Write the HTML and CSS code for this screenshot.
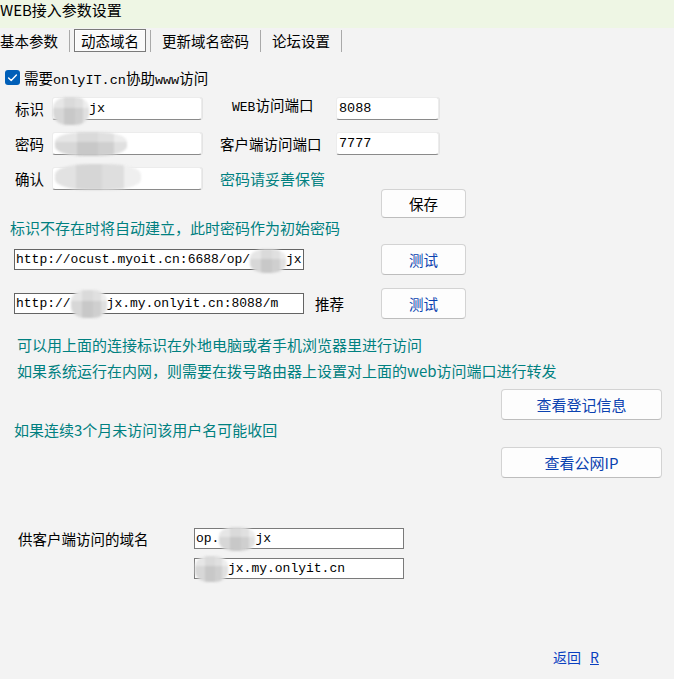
FILE: index.html
```html
<!DOCTYPE html>
<html lang="zh-CN">
<head>
  <meta charset="UTF-8" />
  <title>WEB接入参数设置</title>
  <link rel="stylesheet" href="styles.css">
</head>
<body>

  <!-- title bar -->
  <div class="titlebar">WEB接入参数设置</div>

  <!-- tab strip -->
  <div class="tabs">
    <span class="tab">基本参数</span>
    <i class="tab-sep"></i>
    <span class="tab active">动态域名</span>
    <i class="tab-sep"></i>
    <span class="tab">更新域名密码</span>
    <i class="tab-sep"></i>
    <span class="tab">论坛设置</span>
    <i class="tab-sep"></i>
  </div>

  <div class="panel">
    <label class="check-row">
      <svg class="checkbox" width="15" height="15" viewBox="0 0 15 15">
        <rect x="0" y="0" width="15" height="15" rx="3" fill="#005fb8"/>
        <polyline points="3.6,7.9 6.2,10.4 11.4,5" fill="none" stroke="#fff" stroke-width="1.4" stroke-linecap="round" stroke-linejoin="round"/>
      </svg>
      <span>需要<span class="mono">onlyIT.cn</span>协助<span class="mono">www</span>访问</span>
    </label>

    <!-- account + ports -->
    <div class="form">
      <span class="label">标识</span>
      <div class="field"><span class="blur blur-id"></span>jx</div>
      <span class="label label-right label-web"><span class="mono">WEB</span>访问端口</span>
      <div class="field">8088</div>

      <span class="label">密码</span>
      <div class="field"><span class="blur blur-pwd"></span></div>
      <span class="label label-right">客户端访问端口</span>
      <div class="field">7777</div>

      <span class="label">确认</span>
      <div class="field"><span class="blur blur-confirm"></span></div>
      <span class="note form-note">密码请妥善保管</span>
    </div>

    <div class="row-save">
      <button class="btn">保存</button>
    </div>

    <div class="note note-init">标识不存在时将自动建立，此时密码作为初始密码</div>

    <div class="url-row url-row-1">
      <div class="url-field">http://ocust.myoit.cn:6688/op/<span class="blur blur-url1"></span>jx</div>
      <span class="hint"></span>
      <button class="btn btn-link">测试</button>
    </div>

    <div class="url-row url-row-2">
      <div class="url-field">http://<span class="blur blur-url2"></span>jx.my.onlyit.cn:8088/m</div>
      <span class="hint">推荐</span>
      <button class="btn btn-link">测试</button>
    </div>

    <div class="note note-remote">可以用上面的连接标识在外地电脑或者手机浏览器里进行访问</div>
    <div class="note note-lan">如果系统运行在内网，则需要在拨号路由器上设置对上面的web访问端口进行转发</div>

    <div class="row-wide row-reg">
      <button class="btn btn-link btn-wide">查看登记信息</button>
    </div>

    <div class="note note-expire">如果连续3个月未访问该用户名可能收回</div>

    <div class="row-wide row-ip">
      <button class="btn btn-link btn-wide">查看公网IP</button>
    </div>

    <!-- domains for clients -->
    <div class="domains">
      <span class="label">供客户端访问的域名</span>
      <div class="domain-field">op.<span class="blur blur-dom1"></span>jx</div>
      <div class="domain-field domain-second"><span class="blur blur-dom2"></span>jx.my.onlyit.cn</div>
    </div>

    <div class="back"><a href="#">返回<u>R</u></a></div>
  </div>

</body>
</html>
```

FILE: styles.css
```css
* {
  box-sizing: border-box;
}

body {
  margin: 0;
  background: #f3f3f3;
  font-family: "Noto Sans CJK SC", "Noto Sans", sans-serif;
  font-size: 14.5px;
  color: #000;
}

.mono {
  font-family: "Liberation Mono", "DejaVu Sans Mono", monospace;
  font-size: 13.5px;
}

/* Title bar */
.titlebar {
  height: 28px;
  background: #eef6e4;
  font-size: 15px;
  line-height: 20px;
}

/* Tabs */
.tabs {
  display: flex;
  align-items: center;
  height: 25px;
}

.tab {
  padding: 0 11px;
  line-height: 20px;
}

.tab:first-child {
  padding-left: 0;
}

.tab.active {
  margin: 0 4px;
  padding: 0 6px;
  height: 23px;
  line-height: 21px;
  border: 1px solid #7a7a7a;
  background: #fafafa;
  box-shadow: inset 1px 1px 0 #fff;
}

.tab-sep {
  width: 1px;
  height: 22px;
  background: #a9a9a9;
}

/* Main panel */
.check-row {
  display: flex;
  align-items: center;
  height: 20px;
  margin-top: 14px;
  padding-left: 5px;
  gap: 4px;
}

.checkbox {
  flex: none;
}

.form {
  display: grid;
  grid-template-columns: 37px 150px 134px 103px;
  grid-auto-rows: 23px;
  row-gap: 12px;
  margin-top: 10px;
  padding-left: 15px;
}

.form .label {
  align-self: center;
  line-height: 20px;
  white-space: nowrap;
}

.form .label-right {
  padding-left: 18px;
}

.form .label-web {
  padding-left: 30px;
  margin-top: -5px;
}

.label-web .mono {
  font-size: 13px;
}

.field {
  display: flex;
  align-items: center;
  height: 23px;
  padding-left: 2px;
  background: #fff;
  border: 1px solid #ececec;
  border-bottom-color: #8a8a8a;
  border-radius: 3px;
  box-shadow: 1px 0 0 #e4e4e4;
  font-family: "Liberation Mono", "DejaVu Sans Mono", monospace;
  font-size: 13.5px;
}

.form-note {
  grid-column: 3 / 5;
  align-self: center;
  padding-left: 18px;
}

.note {
  color: #008080;
  font-size: 15px;
  line-height: 20px;
}

/* Buttons */
.btn {
  height: 31px;
  width: 85px;
  padding: 0;
  background: #fdfdfd;
  border: 1px solid #d3d3d3;
  border-bottom-color: #bdbdbd;
  border-radius: 4px;
  font-family: "Noto Sans CJK SC", sans-serif;
  font-size: 14.5px;
  color: #000;
}

.btn-link {
  color: #0b42b0;
}

.btn-wide {
  width: 161px;
  font-size: 15px;
}

.row-save {
  margin-top: -1px;
  padding-left: 381px;
}

.row-save .btn {
  height: 29px;
}

.note-init {
  padding-left: 10px;
}

/* URL rows */
.url-row {
  display: flex;
  align-items: center;
  padding-left: 14px;
}

.url-row-1 {
  margin-top: 6px;
}

.url-row-2 {
  margin-top: 13px;
}

.url-field {
  display: flex;
  align-items: center;
  width: 290px;
  height: 21px;
  padding-left: 1px;
  background: #fff;
  border: 1px solid #646464;
  font-family: "Liberation Mono", "DejaVu Sans Mono", monospace;
  font-size: 13px;
}

.hint {
  width: 77px;
  padding-left: 11px;
}

.note-remote {
  margin-top: 16px;
  padding-left: 17px;
}

.note-lan {
  margin-top: 6px;
  padding-left: 17px;
}

.row-wide {
  padding-left: 501px;
}

.row-reg {
  margin-top: 8px;
}

.note-expire {
  padding-left: 14px;
  margin-top: 0;
}

.row-ip {
  margin-top: 7px;
}

/* Client domains */
.domains {
  display: grid;
  grid-template-columns: 176px 210px;
  grid-auto-rows: 21px;
  row-gap: 9px;
  margin-top: 50px;
  padding-left: 18px;
}

.domains .label {
  align-self: center;
  line-height: 20px;
}

.domain-field {
  display: flex;
  align-items: center;
  padding-left: 1px;
  background: #fff;
  border: 1px solid #7a7a7a;
  font-family: "Liberation Mono", "DejaVu Sans Mono", monospace;
  font-size: 13px;
}

.domain-second {
  grid-column: 2;
}

.back {
  margin-top: 68px;
  padding-left: 553px;
  line-height: 20px;
}

.back a {
  color: #0a3fbf;
  text-decoration: none;
  font-size: 14px;
}

.back u {
  margin-left: 9px;
}

/* masked values: pixelated, soft-edged patches */
.blur {
  flex: none;
  display: inline-block;
  height: 26px;
  border-radius: 40%;
  background:
    linear-gradient(180deg, rgba(255,255,255,0.25) 0 40%, rgba(0,0,0,0.03) 40% 100%),
    linear-gradient(90deg, #dedede 0 30%, #cecece 30% 60%, #d6d6d6 60% 82%, #e7e7e7 82%);
  filter: blur(1.2px);
}

.blur-id {
  width: 36px;
  margin-left: -2px;
  height: 28px;
  margin-top: 5px;
}

.blur-pwd {
  width: 72px;
  height: 24px;
}

.blur-confirm {
  width: 86px;
  height: 26px;
  margin-top: -4px;
  background:
    linear-gradient(90deg, #e2e2e2 0 25%, #d6d6d6 25% 55%, #dedede 55% 80%, #efefef 80%);
}

.blur-url1 {
  width: 36px;
  height: 24px;
  margin-top: 3px;
}

.blur-url2 {
  width: 36px;
  height: 28px;
}

.blur-dom1 {
  width: 36px;
  height: 24px;
}

.blur-dom2 {
  width: 33px;
  margin-left: -1px;
  height: 26px;
}
```
